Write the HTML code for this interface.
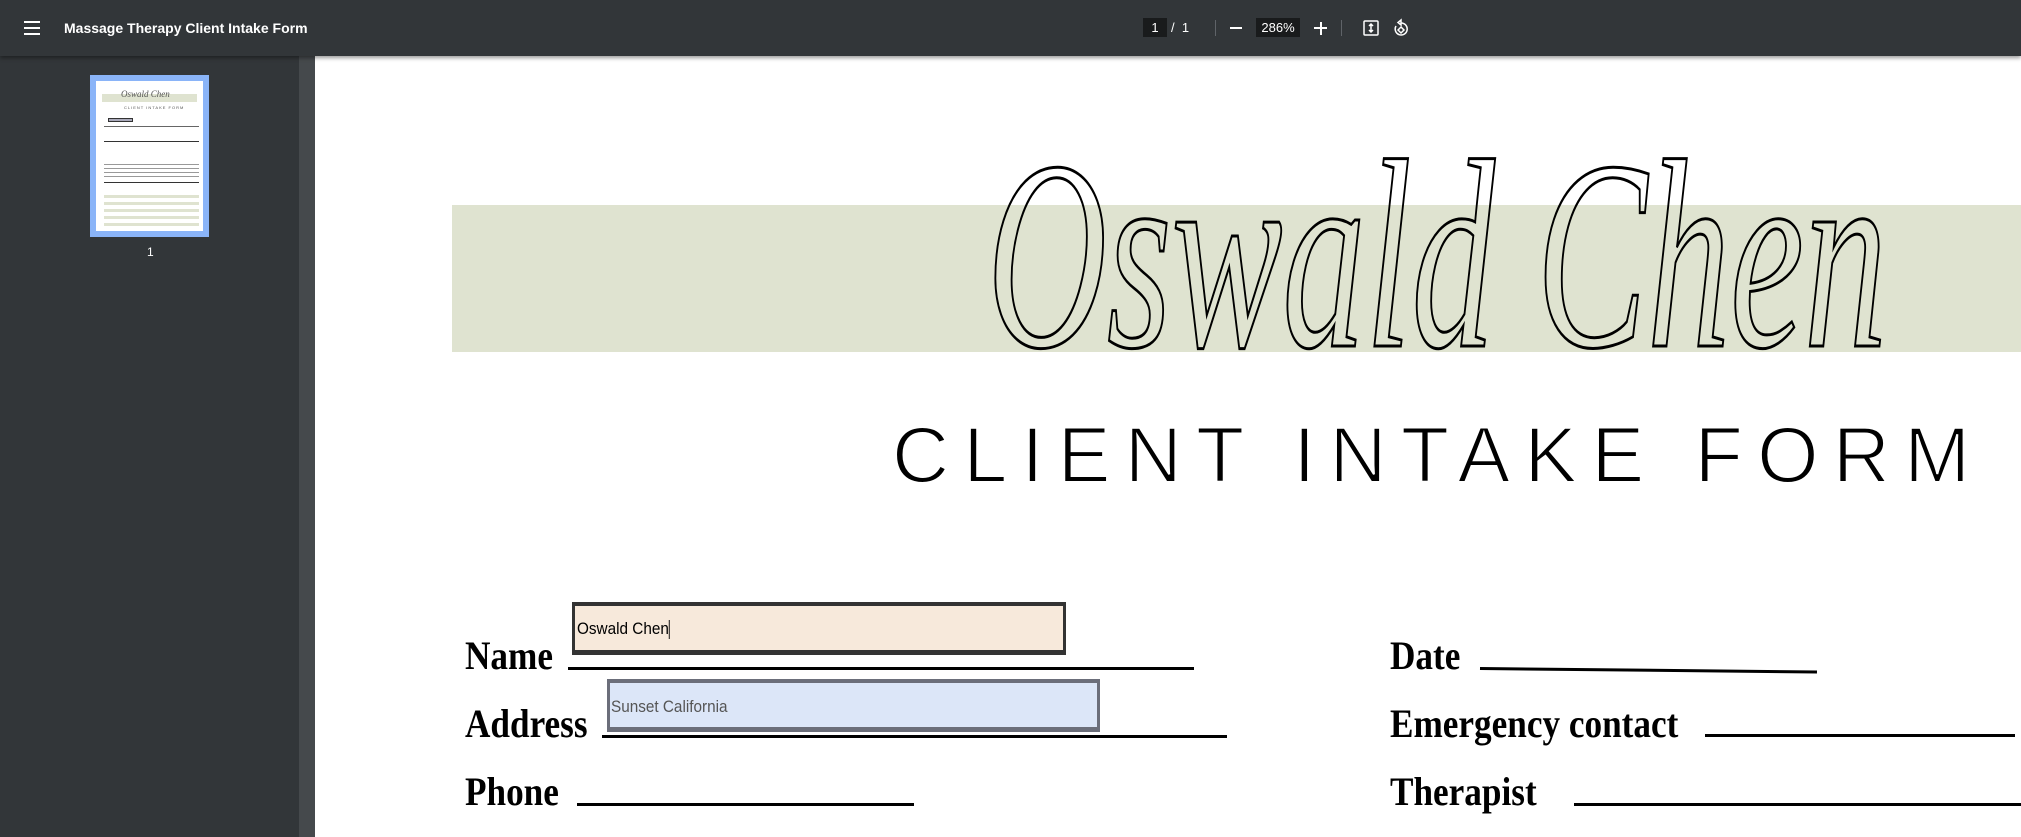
<!DOCTYPE html>
<html><head><meta charset="utf-8"><style>
*{margin:0;padding:0;box-sizing:border-box}
body{width:2021px;height:837px;overflow:hidden;background:#323639;font-family:"Liberation Sans",sans-serif;position:relative}
.tb{position:absolute;left:0;top:0;width:2021px;height:56px;background:#323639;box-shadow:0 2px 4px rgba(0,0,0,.4);z-index:5}
.abs{position:absolute}
.side{position:absolute;left:0;top:56px;width:299px;height:781px;background:#323639}
.strip{position:absolute;left:299px;top:56px;width:16px;height:781px;background:#45494c}
.page{position:absolute;left:315px;top:56px;width:1706px;height:781px;background:#fff;overflow:hidden}
.lbl{position:absolute;font-family:"Liberation Serif",serif;font-weight:bold;font-size:40px;color:#000;transform:scaleX(.88);transform-origin:left}
.ln{position:absolute;height:3px;background:#000}
</style></head><body>
<div class="tb">
 <div class="abs" style="left:24px;top:21px;width:16px;height:2px;background:#fff"></div>
 <div class="abs" style="left:24px;top:27px;width:16px;height:2px;background:#fff"></div>
 <div class="abs" style="left:24px;top:33px;width:16px;height:2px;background:#fff"></div>
 <div class="abs" style="left:64px;top:20px;color:#fff;font-weight:bold;font-size:14px">Massage Therapy Client Intake Form</div>
 <div class="abs" style="left:1143px;top:18px;width:24px;height:19px;background:#191b1c;color:#fff;font-size:13px;text-align:center;line-height:19px">1</div>
 <div class="abs" style="left:1171px;top:18px;color:#fff;font-size:13px;line-height:19px">/&nbsp;&nbsp;1</div>
 <div class="abs" style="left:1215px;top:20px;width:1px;height:16px;background:#5f6368"></div>
 <div class="abs" style="left:1230px;top:27px;width:12px;height:2px;background:#fff"></div>
 <div class="abs" style="left:1256px;top:18px;width:44px;height:19px;background:#191b1c;color:#fff;font-size:13px;text-align:center;line-height:19px">286%</div>
 <div class="abs" style="left:1314px;top:27px;width:13px;height:2px;background:#fff"></div>
 <div class="abs" style="left:1319.5px;top:21.5px;width:2px;height:13px;background:#fff"></div>
 <div class="abs" style="left:1341px;top:20px;width:1px;height:16px;background:#5f6368"></div>
 <svg class="abs" style="left:1361px;top:18px" width="20" height="20" viewBox="0 0 20 20" fill="none" stroke="#fff" stroke-width="1.5"><rect x="3" y="3" width="14" height="14" rx="1"/><path d="M10 6v8M8 8l2-2 2 2M8 12l2 2 2-2"/></svg>
 <svg class="abs" style="left:1390px;top:17px" width="22" height="22" viewBox="0 0 22 22" fill="none" stroke="#fff" stroke-width="1.5"><path d="M11 6a6 6 0 1 1-5 3"/><path d="M11 3v5l-3-2.5z"/><path d="M11 10l3 3-3 3-3-3z"/></svg>
</div>
<div class="side">
 <div class="abs" style="left:90px;top:19px;width:119px;height:162px;background:#8ab4f8"></div>
 <div class="abs" style="left:96px;top:25px;width:107px;height:150px;background:#fff">
  <div class="abs" style="left:6px;top:13px;width:95px;height:8px;background:#dfe3d0"></div>
  <div class="abs" style="left:25px;top:8px;font-size:9px;font-style:italic;color:#555;font-family:'Liberation Serif',serif">Oswald Chen</div>
  <div class="abs" style="left:28px;top:24px;font-size:4px;color:#555;letter-spacing:1px">CLIENT INTAKE FORM</div>
  <div class="abs" style="left:12px;top:37px;width:25px;height:4px;background:#aab;border:1px solid #333"></div>
  <div class="abs" style="left:8px;top:45px;width:95px;height:1px;background:#666"></div>
  <div class="abs" style="left:8px;top:60px;width:95px;height:1px;background:#333"></div>
  <div class="abs" style="left:8px;top:80px;width:95px;height:18px;background:repeating-linear-gradient(#fff 0 3px,#999 3px 4px)"></div>
  <div class="abs" style="left:8px;top:101px;width:95px;height:1px;background:#333"></div>
  <div class="abs" style="left:8px;top:110px;width:95px;height:36px;background:repeating-linear-gradient(#fff 0 4px,#dfe3d0 4px 7px)"></div>
 </div>
 <div class="abs" style="left:147px;top:189px;color:#fff;font-size:12px">1</div>
</div>
<div class="strip"></div>
<div class="page">
 <div class="abs" style="left:137px;top:149px;width:1569px;height:147px;background:#dfe3d0"></div>
 <svg class="abs" style="left:0;top:0" width="1706" height="781">
  <text x="672" y="290" font-family="Liberation Serif,serif" font-style="italic" font-size="270" textLength="900" lengthAdjust="spacingAndGlyphs" fill="none" stroke="#000" stroke-width="3">Oswald Chen</text>
  <text x="577" y="426" font-family="Liberation Sans,sans-serif" font-size="79" textLength="1078" lengthAdjust="spacing" fill="#000" stroke="#fff" stroke-width="2">CLIENT INTAKE FORM</text>
 </svg>
 <div class="lbl" style="left:150px;top:576px">Name</div>
 <div class="ln" style="left:253px;top:611px;width:626px"></div>
 <div class="abs" style="left:257px;top:546px;width:494px;height:53px;background:#f7e9db;border:4px solid #333;border-width:4px 3px 5px 3px"></div>
 <div class="abs" style="left:262px;top:563px;font-size:17px;color:#000;transform:scaleX(.9);transform-origin:left">Oswald Chen<span style="display:inline-block;width:1px;height:19px;background:#000;vertical-align:middle"></span></div>
 <div class="lbl" style="left:150px;top:644px">Address</div>
 <div class="ln" style="left:287px;top:679px;width:625px"></div>
 <div class="abs" style="left:292px;top:623px;width:493px;height:53px;background:#dce6f8;border:3px solid #6b6e7a;border-width:4px 3px 5px 3px"></div>
 <div class="abs" style="left:296px;top:641px;font-size:17px;color:#555;transform:scaleX(.9);transform-origin:left">Sunset California</div>
 <div class="lbl" style="left:150px;top:712px">Phone</div>
 <div class="ln" style="left:262px;top:747px;width:337px"></div>
 <div class="lbl" style="left:1075px;top:576px">Date</div>
 <div class="ln" style="left:1165px;top:611px;width:337px;transform:rotate(.6deg);transform-origin:left"></div>
 <div class="lbl" style="left:1075px;top:644px">Emergency contact</div>
 <div class="ln" style="left:1390px;top:678px;width:310px"></div>
 <div class="lbl" style="left:1075px;top:712px">Therapist</div>
 <div class="ln" style="left:1259px;top:747px;width:447px"></div>
</div>
</body></html>
